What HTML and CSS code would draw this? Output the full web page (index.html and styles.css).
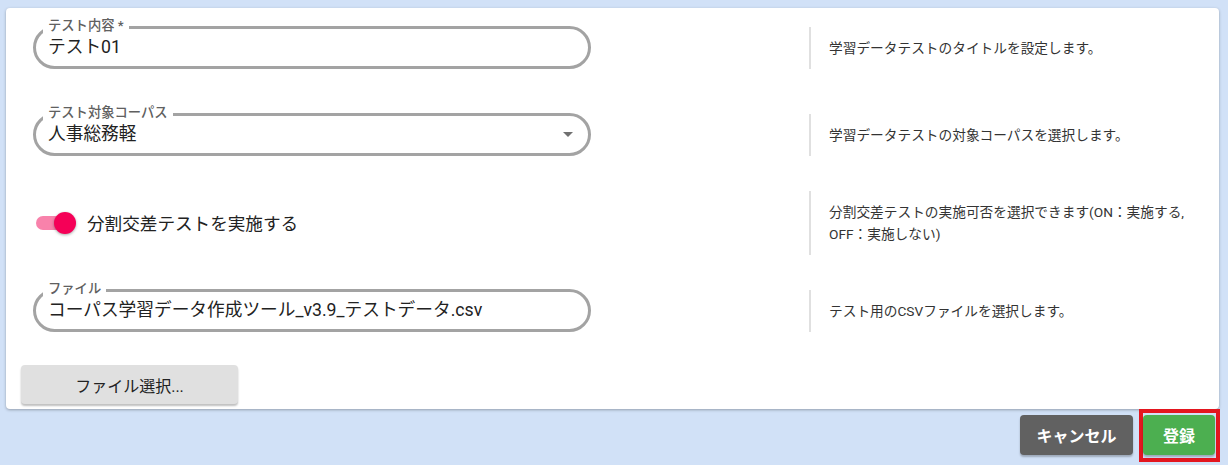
FILE: index.html
```html
<!DOCTYPE html>
<html lang="ja">
<head>
<meta charset="utf-8">
<link rel="stylesheet" href="styles.css">
</head>
<body>
<div class="card">
  <div class="form">
    <div class="row">
      <div class="left">
        <div class="field">
          <span class="field-label">テスト内容 *</span>
          <div class="field-value">テスト01</div>
        </div>
      </div>
      <div class="help">学習データテストのタイトルを設定します。</div>
    </div>
    <div class="row">
      <div class="left">
        <div class="field">
          <span class="field-label">テスト対象コーパス</span>
          <div class="field-value">人事総務軽</div>
          <span class="caret"></span>
        </div>
      </div>
      <div class="help">学習データテストの対象コーパスを選択します。</div>
    </div>
    <div class="row row-switch">
      <div class="left">
        <label class="switch">
          <span class="track"><span class="thumb"></span></span>
          <span class="switch-text">分割交差テストを実施する</span>
        </label>
      </div>
      <div class="help">分割交差テストの実施可否を選択できます(ON：実施する,<br>OFF：実施しない)</div>
    </div>
    <div class="row">
      <div class="left">
        <div class="field">
          <span class="field-label">ファイル</span>
          <div class="field-value">コーパス学習データ作成ツール_v3.9_テストデータ.csv</div>
        </div>
      </div>
      <div class="help">テスト用のCSVファイルを選択します。</div>
    </div>
  </div>
  <button class="file-btn">ファイル選択...</button>
</div>
<div class="footer">
  <button class="btn btn-cancel">キャンセル</button>
  <span class="highlight"><button class="btn btn-submit">登録</button></span>
</div>
</body>
</html>
```
FILE: styles.css
```css
* { box-sizing: border-box; }
html, body { margin: 0; padding: 0; }
body {
  background: #d1e1f7;
  font-family: Roboto, "Noto Sans CJK JP", sans-serif;
  color: #222;
  height: 465px;
  overflow: hidden;
}
.card {
  margin: 8px 9px 0 6px;
  background: #fff;
  border-radius: 4px;
  box-shadow: 0 1px 3px rgba(0,0,0,0.3);
  padding: 18px 0 5px 15px;
}
.form {
  display: flex;
  flex-direction: column;
  gap: 44px;
}
.row {
  display: flex;
  align-items: center;
  height: 43px;
}
.row-switch { height: 45px; }
.left {
  flex: none;
  width: 788px;
  padding-left: 12px;
}
.field {
  position: relative;
  width: 558px;
  height: 43px;
  border: 3px solid #a3a3a3;
  border-radius: 22px;
}
.field-label {
  position: absolute;
  top: -11px;
  left: 7px;
  padding: 0 5px;
  background: #fff;
  font-size: 13.3px;
  line-height: 15px;
  color: #606060;
  font-weight: 500;
  white-space: nowrap;
}
.field-value {
  padding: 1px 40px 0 12px;
  font-size: 17.7px;
  line-height: 35px;
  color: #222;
  white-space: nowrap;
}
.caret {
  position: absolute;
  right: 15px;
  top: 16px;
  width: 0;
  height: 0;
  border-left: 5px solid transparent;
  border-right: 5px solid transparent;
  border-top: 5px solid #707070;
}
.help {
  flex: 1;
  border-left: 2px solid #e0e0e0;
  padding: 10px 10px 10px 18px;
  font-size: 13.7px;
  line-height: 22px;
  color: #333;
}
.switch {
  display: flex;
  align-items: center;
  margin-left: 3px;
}
.track {
  position: relative;
  width: 34px;
  height: 14px;
  border-radius: 7px;
  background: #f882ab;
}
.thumb {
  position: absolute;
  left: 18px;
  top: -4px;
  width: 22px;
  height: 22px;
  border-radius: 50%;
  background: #f50057;
  box-shadow: 0 1px 3px rgba(0,0,0,0.35);
}
.switch-text {
  margin-left: 17px;
  font-size: 17.6px;
  color: #222;
}
.file-btn {
  display: block;
  margin-top: 33px;
  margin-left: 0;
  width: 217px;
  height: 39px;
  border: none;
  border-radius: 4px;
  background: #e0e0e0;
  box-shadow: 0 2px 2px rgba(0,0,0,0.25);
  font-family: Roboto, "Noto Sans CJK JP", sans-serif;
  font-size: 16px;
  color: #222;
}
.footer {
  display: flex;
  justify-content: flex-end;
  align-items: flex-start;
  padding-right: 8px;
}
.btn {
  height: 40px;
  border: none;
  border-radius: 4px;
  font-family: Roboto, "Noto Sans CJK JP", sans-serif;
  font-size: 16px;
  font-weight: 700;
  color: #fff;
  box-shadow: 0 2px 2px rgba(0,0,0,0.25);
}
.btn-cancel {
  margin-top: 6px;
  margin-right: 6px;
  width: 113px;
  background: #616161;
}
.highlight {
  display: block;
  border: 4px solid #e3161f;
  padding: 2px 1px 3px 0;
}
.btn-submit {
  display: block;
  width: 72px;
  background: #4caf50;
}
```
